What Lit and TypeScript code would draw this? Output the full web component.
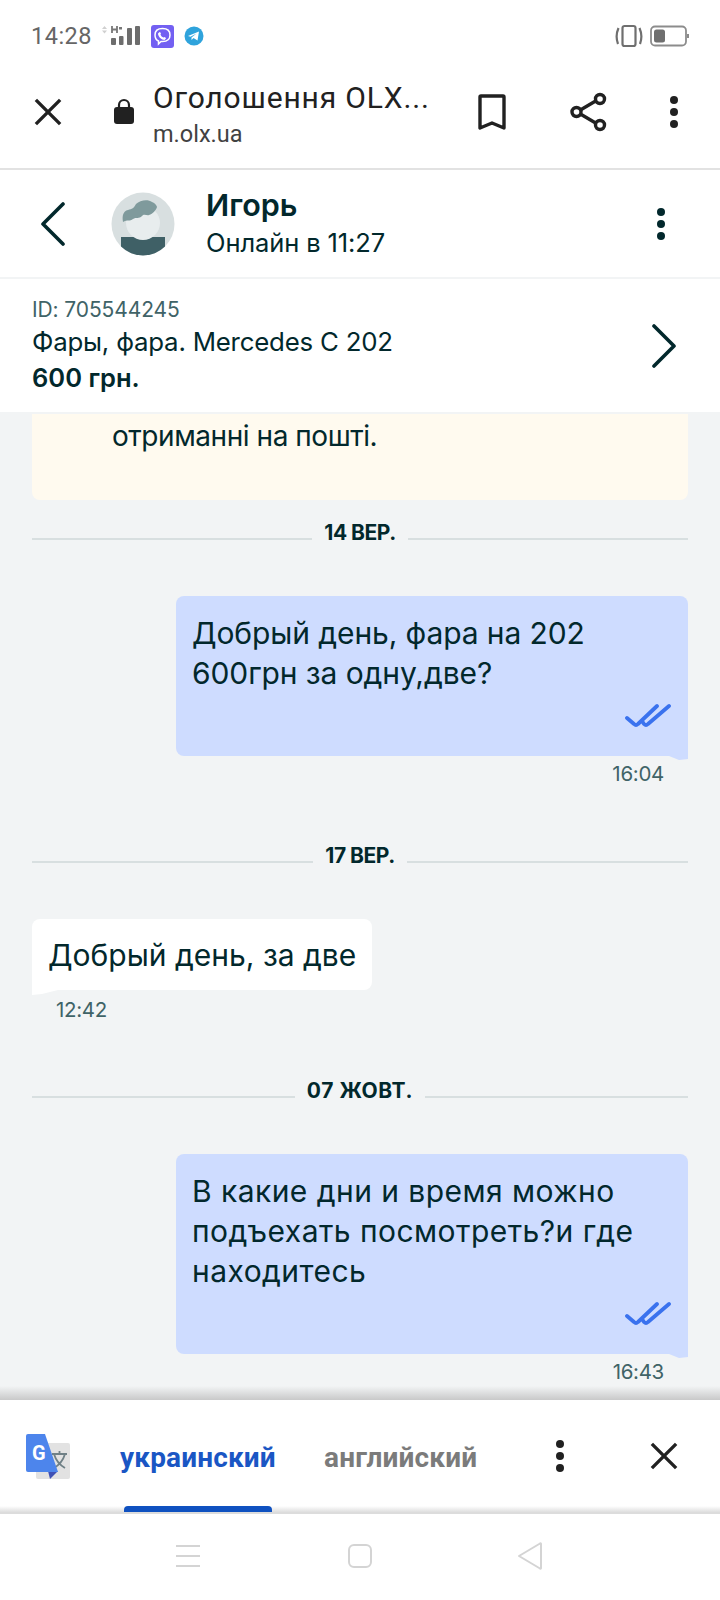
import { LitElement, html, css } from "lit";
import { customElement } from "lit/decorators.js";

const closeIcon = html`<svg width="28" height="28" viewBox="0 0 30 30"><path d="M2 2 L28 28 M28 2 L2 28" stroke="#212121" stroke-width="3.6" fill="none"/></svg>`;
const dots = (c: string) => html`<svg width="10" height="32" viewBox="0 0 10 32"><circle cx="5" cy="4" r="4" fill="${c}"/><circle cx="5" cy="16" r="4" fill="${c}"/><circle cx="5" cy="28" r="4" fill="${c}"/></svg>`;
const checks = html`<svg class="checks" width="46" height="28" viewBox="0 0 46 28"><path d="M2 15 L9 21 Q11 23 13 21 L32 3 M17 18 L19 21 Q21 23 23 21 L44 3" stroke="#3a72ee" stroke-width="3.8" fill="none" stroke-linecap="round" stroke-linejoin="round"/></svg>`;
const tailRight = html`<svg class="tail-r" width="24" height="8" viewBox="0 0 24 8"><path d="M0 0 L24 0 L24 5 L15 6 Z" fill="#cedcff"/></svg>`;
const tailLeft = html`<svg class="tail-l" width="30" height="6" viewBox="0 0 30 6"><path d="M0 0 L30 0 L10 5 L0 6 Z" fill="#fff"/></svg>`;

@customElement("app-root")
export class AppRoot extends LitElement {
  static styles = css`
    :host { display: block; width: 720px; height: 1600px; overflow: hidden; background: #fff; font-family: "Inter", "Noto Sans", sans-serif; color: #02282c; }
    .page { display: flex; flex-direction: column; height: 1600px; }

    .status { height: 60px; flex: none; display: flex; align-items: center; padding: 12px 30px 0 31px; box-sizing: border-box; gap: 8px; color: #6f6f6f; }
    .status .time { font: 400 23.5px "Roboto", sans-serif; color: #666; letter-spacing: .5px; width: 60px; white-space: nowrap; }
    .status .spacer { flex: 1; }
    .status svg { display: block; }
    .status .viber { margin-left: 2px; }
    .status .rot { margin-right: -2px; }

    .toolbar { height: 110px; flex: none; box-sizing: border-box; border-bottom: 2px solid #e2e2e2; display: flex; align-items: center; padding: 0 0 0 34px; }
    .toolbar .x { width: 28px; height: 28px; margin: -4px 52px 0 0; }
    .toolbar .x svg { display: block; }
    .lock { margin: -6px 19px 0 0; display: block; }
    .url { width: 278px; margin-top: 2px; font-family: "Roboto", sans-serif; }
    .url .t { font-size: 30px; line-height: 38px; color: #212121; letter-spacing: .85px; white-space: nowrap; }
    .url .u { font-size: 23.5px; line-height: 34px; color: #424242; }
    .tb-icons { display: flex; align-items: center; margin-top: -4px; }
    .tb-icons svg { display: block; }
    .tb-icons .bm { margin-left: 47px; }
    .tb-icons .sh { margin-left: 64px; }
    .tb-icons .dt { margin-left: 61px; }

    .head { height: 109px; flex: none; box-sizing: border-box; border-bottom: 2px solid #f2f4f5; display: flex; align-items: center; padding: 0 0 0 40px; }
    .head .back { display: block; margin-right: 45px; }
    .head .avatar { display: block; margin-right: 31px; }
    .head .who { flex: 1; }
    .head .name { font-size: 30.5px; font-weight: 600; line-height: 38px; }
    .head .seen { font-size: 25.5px; line-height: 38px; color: #02282c; letter-spacing: -.1px; }
    .head .more { margin-right: 54px; display: block; }
    .head .more svg { display: block; }

    .product { height: 133px; flex: none; box-sizing: border-box; display: flex; align-items: center; padding: 16px 32px 15px 32px; }
    .product .info { flex: 1; }
    .product .id { font-size: 21px; line-height: 30px; color: #406367; letter-spacing: -.1px; }
    .product .title { font-size: 25.8px; line-height: 34px; letter-spacing: -.2px; white-space: nowrap; }
    .product .price { font-size: 25.5px; line-height: 38px; font-weight: 600; }
    .product svg { display: block; margin-right: 11px; }

    .chat { flex: 1; min-height: 0; overflow: hidden; background: #f2f4f5; padding: 2px 32px 0; position: relative; display: flex; flex-direction: column; }
    .notice { height: 86px; flex: none; box-sizing: border-box; background: #fffaef; border-radius: 0 0 8px 8px; padding: 2px 0 0 80px; font-size: 28px; line-height: 40px; letter-spacing: -.45px; }
    .sep { display: flex; align-items: center; gap: 12px; font-size: 21px; font-weight: 700; color: #02282c; flex: none; }
    .sep::before, .sep::after { content: ""; flex: 1; height: 2px; background: #d8dfe0; }
    .sep span { letter-spacing: -.5px; line-height: 26px; padding-bottom: 12px; }
    .s1 { margin-top: 20px; }
    .s2 { margin-top: 55px; }
    .s3 { margin-top: 54px; }
    .s3 span { letter-spacing: .6px; }

    .bubble { position: relative; flex: none; box-sizing: border-box; font-size: 30px; line-height: 40px; letter-spacing: -.1px; }
    .mine { align-self: flex-end; width: 512px; background: #cedcff; border-radius: 8px 8px 0 8px; padding: 17px 16px 0 16px; }
    .theirs { align-self: flex-start; background: #fff; border-radius: 8px 8px 8px 0; padding: 16px 16px 15px 16px; width: 340px; height: 71px; white-space: nowrap; letter-spacing: 0; }
    .b1 { margin-top: 38px; height: 160px; }
    .b2 { margin-top: 38px; }
    .b3 { margin-top: 38px; height: 200px; letter-spacing: .45px; }
    .checks { position: absolute; right: 17px; bottom: 25px; display: block; }
    .tail-r { position: absolute; right: 0; bottom: -6px; display: block; }
    .tail-l { position: absolute; left: 0; bottom: -5px; display: block; }
    .stamp { font-size: 20.5px; line-height: 28px; color: #406367; flex: none; letter-spacing: -.3px; }
    .stamp.r { align-self: flex-end; margin: 4px 24px 0 0; }
    .stamp.l { align-self: flex-start; margin: 6px 0 0 24px; }
    .fade { position: absolute; left: 0; right: 0; bottom: 0; height: 14px; background: linear-gradient(to bottom, rgba(190,190,190,0), rgba(190,190,190,.8)); }

    .translate { height: 114px; flex: none; box-sizing: border-box; background: #fff; display: flex; align-items: center; position: relative; padding-left: 26px; border-bottom: 2px solid #dcdcdc; font-family: "Roboto", sans-serif; }
    .translate::after { content: ""; position: absolute; left: 0; right: 0; bottom: 0; height: 6px; background: linear-gradient(to bottom, rgba(200,200,200,0), rgba(200,200,200,.6)); }
    .translate .g { display: block; margin-right: 50px; }
    .tab { font-size: 28px; font-weight: 700; margin-top: 2px; white-space: nowrap; letter-spacing: .15px; }
    .tab.on { color: #1a56c4; width: 156px; margin-right: 48px; }
    .bar { position: absolute; left: 124px; width: 148px; bottom: 0; height: 6px; background: #0f51c0; border-radius: 4px 4px 0 0; z-index: 1; }
    .tab.off { color: #7b7b7b; width: 151px; }
    .translate .d { display: block; margin-left: 80px; }
    .translate .d svg { display: block; }
    .translate .c { display: block; margin-left: 85px; width: 28px; height: 28px; }
    .translate .c svg { display: block; }

    .nav { height: 86px; flex: none; background: #fff; display: flex; align-items: center; padding: 0 0 2px 176px; box-sizing: border-box; }
    .nav svg { display: block; }
    .nav .n2 { margin-left: 148px; }
    .nav .n3 { margin-left: 145px; }
  `;

  render() {
    return html`<div class="page">
      <div class="status">
        <span class="time">14:28</span>
        <svg width="42" height="24" viewBox="0 0 42 24">
          <path d="M3 5 L5.5 2 L8 5 Z M3 6.500 L8 6.500 L5.500 9.500 Z" fill="#d0d0d0"/>
          <path d="M13 2 V9 M18 2 V9 M13 5.500 H18" stroke="#777" stroke-width="1.800" fill="none"/>
          <rect x="20" y="3" width="3" height="2.500" fill="#777"/>
          <rect x="12" y="14" width="5" height="7" rx="1" fill="#6d6d6d"/>
          <rect x="20" y="12" width="4.500" height="9" rx="1" fill="#6d6d6d"/>
          <rect x="28" y="4" width="5" height="17" rx="1" fill="#6d6d6d"/>
          <rect x="36" y="2" width="5" height="19" rx="1" fill="#6d6d6d"/>
        </svg>
        <svg class="viber" width="23" height="23" viewBox="0 0 23 23">
          <rect width="23" height="23" rx="3" fill="#7360f2"/>
          <path d="M11.500 3.500c5 0 7.500 2 7.500 6.500s-2.500 6.500-7.500 6.500l-1.500 0-2.500 2.500v-3c-2.500-1-3.500-3-3.500-6 0-4.500 2.500-6.500 7.500-6.500z" fill="none" stroke="#fff" stroke-width="1.500"/>
          <path d="M8.500 7l1.500 1-.5 1.500c.5 1.500 1.500 2.500 3 3l1.500-.5 1 1.500-1.500 1.500c-3 0-6.500-3.500-6.500-6.500z" fill="#fff"/>
        </svg>
        <svg width="24" height="24" viewBox="0 0 24 24">
          <circle cx="12" cy="12" r="9.500" fill="#2fa3dc"/>
          <path d="M6 12 L17 7.500 L15.500 16.500 L11.500 14 L9.500 16 L9.500 13.500 L14.500 9.500 L8.500 12.800 Z" fill="#fff"/>
        </svg>
        <span class="spacer"></span>
        <svg class="rot" width="30" height="24" viewBox="0 0 30 24">
          <rect x="8.500" y="2" width="13" height="20" rx="2" fill="none" stroke="#6f6f6f" stroke-width="2.200"/>
          <path d="M4.500 4 Q1 12 4 20 M25.500 4 Q29 12 26 20" fill="none" stroke="#6f6f6f" stroke-width="2.200"/>
        </svg>
        <svg width="40" height="22" viewBox="0 0 40 22">
          <rect x="1" y="1.500" width="35" height="19" rx="4" fill="none" stroke="#8c8c8c" stroke-width="1.800"/>
          <rect x="4" y="4.500" width="11" height="13" rx="2.500" fill="#6f6f6f"/>
          <rect x="37" y="9" width="2" height="4" fill="#8c8c8c"/>
        </svg>
      </div>

      <div class="toolbar">
        <div class="x">${closeIcon}</div>
        <svg class="lock" width="20" height="28" viewBox="0 0 20 28"><path d="M5 12 V8 a5 5 0 0 1 10 0 V12" fill="none" stroke="#212121" stroke-width="2.200"/><rect x="0" y="10" width="20" height="17" rx="3" fill="#212121"/></svg>
        <div class="url"><div class="t">Оголошення OLX...</div><div class="u">m.olx.ua</div></div>
        <div class="tb-icons">
          <svg class="bm" width="28" height="36" viewBox="0 0 28 36"><path d="M2 34 V3 Q2 2 3 2 H25 Q26 2 26 3 V34 L14 29 Z" fill="none" stroke="#212121" stroke-width="3.400" stroke-linejoin="round"/></svg>
          <svg class="sh" width="38" height="40" viewBox="0 0 38 40"><path d="M7 20 L29 7 M7 20 L29 33" stroke="#212121" stroke-width="3.400"/><circle cx="6.500" cy="20" r="4.500" fill="#fff" stroke="#212121" stroke-width="3.400"/><circle cx="30" cy="7" r="4.500" fill="#fff" stroke="#212121" stroke-width="3.400"/><circle cx="30" cy="33" r="4.500" fill="#fff" stroke="#212121" stroke-width="3.400"/></svg>
          <span class="dt">${dots("#212121")}</span>
        </div>
      </div>

      <div class="head">
        <svg class="back" width="26" height="44" viewBox="0 0 26 44"><path d="M23 2 L3 22 L23 42" fill="none" stroke="#02282c" stroke-width="3.600" stroke-linecap="round" stroke-linejoin="round"/></svg>
        <svg class="avatar" width="64" height="64" viewBox="0 0 64 64">
          <circle cx="32" cy="32" r="31.500" fill="#d8dfe0"/>
          <path d="M10 45 H54 V54.500 A31.500 31.500 0 0 1 10 54.500 Z" fill="#3f6066"/>
          <circle cx="32" cy="31" r="17" fill="#e8edee"/>
          <path d="M12 30 C11 24 12 19 17 18 C21 17 23 16 25 12 C29 8 37 7 41 10 C44 11 46 14 46 15 C45 18 42 22 38 23 C36 24 33 21 31 24 C28 27 25 25 22 27 C19 30 16 27 12 30 Z" fill="#7f9a9c"/>
        </svg>
        <div class="who"><div class="name">Игорь</div><div class="seen">Онлайн в 11:27</div></div>
        <span class="more">${dots("#02282c")}</span>
      </div>

      <div class="product">
        <div class="info">
          <div class="id">ID: 705544245</div>
          <div class="title">Фары, фара. Mercedes C 202</div>
          <div class="price">600 грн.</div>
        </div>
        <svg width="26" height="44" viewBox="0 0 26 44"><path d="M3 2 L23 22 L3 42" fill="none" stroke="#02282c" stroke-width="3.600" stroke-linecap="round" stroke-linejoin="round"/></svg>
      </div>

      <div class="chat">
        <div class="notice">отриманні на пошті.</div>
        <div class="sep s1"><span>14 ВЕР.</span></div>
        <div class="bubble mine b1">Добрый день, фара на 202 600грн за одну,две?${checks}${tailRight}</div>
        <div class="stamp r">16:04</div>
        <div class="sep s2"><span>17 ВЕР.</span></div>
        <div class="bubble theirs b2">Добрый день, за две${tailLeft}</div>
        <div class="stamp l">12:42</div>
        <div class="sep s3"><span>07 ЖОВТ.</span></div>
        <div class="bubble mine b3">В какие дни и время можно подъехать посмотреть?и где находитесь${checks}${tailRight}</div>
        <div class="stamp r">16:43</div>
        <div class="fade"></div>
      </div>

      <div class="translate">
        <svg class="g" width="44" height="45" viewBox="0 0 44 45">
          <rect x="10" y="9" width="34" height="36" rx="2" fill="#e2e2e2"/>
          <path d="M26 20 h15 M33.500 17 v3 M28 20 c2 7 6 11 11 14 M39 20 c-2 7 -6 11 -11 14" fill="none" stroke="#6f8086" stroke-width="1.800"/>
          <path d="M22 37 H32 L24 45 Z" fill="#3f51b5"/>
          <path d="M2 0 H19 L32 38 H2 Q0 38 0 36 V2 Q0 0 2 0 Z" fill="#4d85ec"/>
          <text x="6" y="26" font-family="Roboto, sans-serif" font-weight="700" font-size="20" fill="#fff">G</text>
        </svg>
        <div class="tab on">украинский</div>
        <div class="tab off">английский</div>
        <span class="d">${dots("#212121")}</span>
        <div class="c">${closeIcon}</div>
        <div class="bar"></div>
      </div>

      <div class="nav">
        <svg width="24" height="24" viewBox="0 0 24 24"><path d="M0 2 H24 M0 12 H24 M0 22 H24" stroke="#d4d4d4" stroke-width="2"/></svg>
        <svg class="n2" width="24" height="24" viewBox="0 0 24 24"><rect x="1" y="1" width="22" height="22" rx="5" fill="none" stroke="#d4d4d4" stroke-width="2"/></svg>
        <svg class="n3" width="26" height="28" viewBox="0 0 26 28"><path d="M24 2 V26 Q24 27 23 26.500 L2 14 L23 1.500 Q24 1 24 2 Z" fill="none" stroke="#d4d4d4" stroke-width="2" stroke-linejoin="round"/></svg>
      </div>
    </div>`;
  }
}
